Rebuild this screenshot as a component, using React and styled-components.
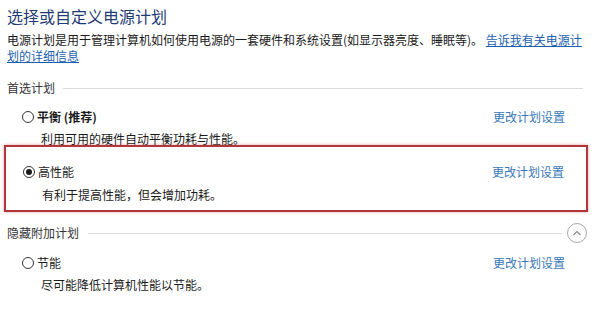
import React from 'react';
import styled, { createGlobalStyle, css } from 'styled-components';

const Global = createGlobalStyle`
  html, body { margin: 0; padding: 0; background: #fff; }
  body { font-family: "Noto Sans CJK SC", "Noto Sans", sans-serif; color: #1a1a1a; }
`;

const Page = styled.div`
  width: 597px;
  height: 336px;
  box-sizing: border-box;
  padding: 6px 10px 0 7px;
  display: flex;
  flex-direction: column;
  overflow: hidden;
`;

const Title = styled.h1`
  margin: 0;
  font-size: 16px;
  line-height: 20px;
  font-weight: 400;
  color: #1f3b74;
`;

const Intro = styled.p`
  margin: 6px 0 0;
  font-size: 12px;
  line-height: 16px;
  color: #1a1a1a;
`;

const InfoLink = styled.a`
  color: #1c5fae;
  text-decoration: underline;
  cursor: pointer;
`;

const SectionHeader = styled.div`
  display: flex;
  align-items: center;
  height: ${p => p.$h}px;
  margin-top: ${p => p.$mt}px;
  font-size: 12px;
  color: #333;
`;

const SectionLabel = styled.span`
  line-height: 16px;
  margin-right: ${p => p.$gap}px;
`;

const Rule = styled.div`
  flex: 1;
  height: 1px;
  background: #dadada;
  margin-right: ${p => p.$mr}px;
`;

const Collapse = styled.button`
  width: 20px;
  height: 20px;
  box-sizing: border-box;
  border: 1px solid #a8a8a8;
  border-radius: 50%;
  background: #fff;
  padding: 0;
  display: flex;
  align-items: center;
  justify-content: center;
  cursor: pointer;
`;

const Plan = styled.div`
  display: grid;
  grid-template-columns: 1fr auto;
  row-gap: 6px;
  margin-top: ${p => p.$mt}px;
  padding-left: 15px;
  ${p => p.$selected && css`
    border: 2px solid #b3363a;
    box-shadow: 0 0 3px rgba(179, 54, 58, 0.45);
    margin-left: -3px;
    margin-right: -1px;
    padding: 17px 0 7px 17px;
    row-gap: 7px;
  `}
`;

const PlanTitle = styled.label`
  display: flex;
  align-items: center;
  gap: 3px;
  font-size: 12px;
  line-height: 16px;
  font-weight: ${p => (p.$bold ? 700 : 400)};
  color: #1a1a1a;
`;

const Radio = styled.span`
  width: 12px;
  height: 12px;
  box-sizing: border-box;
  border-radius: 50%;
  border: 1px solid #333;
  background: #fff;
  display: inline-flex;
  align-items: center;
  justify-content: center;
  flex-shrink: 0;
  &::after {
    content: '';
    width: 6px;
    height: 6px;
    border-radius: 50%;
    background: #1a1a1a;
    display: ${p => (p.$checked ? 'block' : 'none')};
  }
`;

const PlanDesc = styled.div`
  grid-column: 1 / 2;
  padding-left: 19px;
  font-size: 12px;
  line-height: 16px;
  color: #1a1a1a;
`;

const ChangeLink = styled.a`
  font-size: 12px;
  line-height: 16px;
  color: #3a78b8;
  margin-right: 22px;
  cursor: pointer;
  align-self: center;
`;

function PlanItem({ name, desc, selected, bold, mt }) {
  return (
    <Plan $selected={selected} $mt={mt}>
      <PlanTitle $bold={bold}>
        <Radio $checked={selected} />
        {name}
      </PlanTitle>
      <ChangeLink>更改计划设置</ChangeLink>
      <PlanDesc>{desc}</PlanDesc>
    </Plan>
  );
}

export default function App() {
  return (
    <>
      <Global />
      <Page>
        <Title>选择或自定义电源计划</Title>
        <Intro>
          电源计划是用于管理计算机如何使用电源的一套硬件和系统设置(如显示器亮度、睡眠等)。{' '}
          <InfoLink>告诉我有关电源计划的详细信息</InfoLink>
        </Intro>

        <SectionHeader $h={16} $mt={16}>
          <SectionLabel $gap={8}>首选计划</SectionLabel>
          <Rule $mr={4} />
        </SectionHeader>

        <PlanItem name="平衡 (推荐)" bold desc="利用可用的硬件自动平衡功耗与性能。" mt={13} />
        <PlanItem name="高性能" selected desc="有利于提高性能，但会增加功耗。" mt={-2} />

        <SectionHeader $h={20} $mt={11}>
          <SectionLabel $gap={9}>隐藏附加计划</SectionLabel>
          <Rule $mr={5} />
          <Collapse aria-label="折叠">
            <svg width="12" height="12" viewBox="0 0 12 12">
              <polyline points="2.5,8 6,4.5 9.5,8" fill="none" stroke="#8a8a8a" strokeWidth="1.2" />
            </svg>
          </Collapse>
        </SectionHeader>

        <PlanItem name="节能" desc="尽可能降低计算机性能以节能。" mt={12} />
      </Page>
    </>
  );
}
